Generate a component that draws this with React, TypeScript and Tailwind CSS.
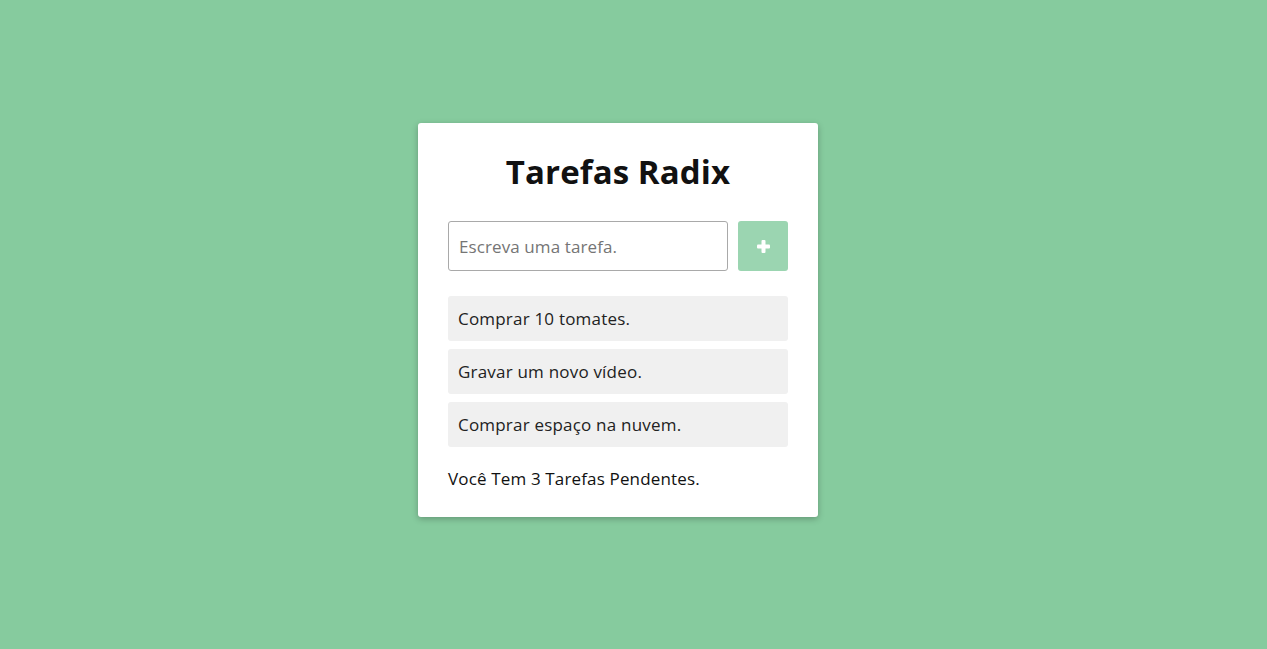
import React from "react";

export default function App() {
  const tasks = ["Comprar 10 tomates.", "Gravar um novo vídeo.", "Comprar espaço na nuvem."];
  return (
    <div
      className="min-h-screen w-full bg-[#86cb9e] flex justify-center pt-[123px] pr-[31px]"
      style={{ fontFamily: '"Open Sans", "Noto Sans", sans-serif' }}
    >
      <div className="w-[400px] h-[394px] bg-white rounded-[3px] shadow-[0_2px_6px_rgba(0,0,0,0.25)] px-[30px] pt-[30px] flex flex-col">
        <h1 className="text-[33px] leading-[38px] font-bold text-center text-[#111] tracking-[0.1px]">
          Tarefas Radix
        </h1>
        <div className="mt-[30px] flex gap-[10px]">
          <input
            className="w-[280px] h-[50px] border border-[#a9a9a9] rounded-[3px] px-[10px] text-[17px] tracking-[0.1px] text-[#333] placeholder:text-[#757575] outline-none"
            placeholder="Escreva uma tarefa."
          />
          <button className="w-[50px] h-[50px] rounded-[3px] bg-[#9bd5b1] flex items-center justify-center">
            <svg width="13" height="13" viewBox="0 0 13 13">
              <rect x="4.5" y="0" width="4" height="13" rx="1" fill="white" />
              <rect x="0" y="4.5" width="13" height="4" rx="1" fill="white" />
            </svg>
          </button>
        </div>
        <ul className="mt-[25px] flex flex-col gap-[8px]">
          {tasks.map((t) => (
            <li
              key={t}
              className="h-[45px] bg-[#f0f0f0] rounded-[3px] px-[10px] flex items-center text-[17px] tracking-[0.2px] text-[#222]"
            >
              {t}
            </li>
          ))}
        </ul>
        <p className="mt-[20px] text-[17px] leading-[24px] font-medium tracking-[0.15px] text-[#111]">
          Você Tem 3 Tarefas Pendentes.
        </p>
      </div>
    </div>
  );
}
